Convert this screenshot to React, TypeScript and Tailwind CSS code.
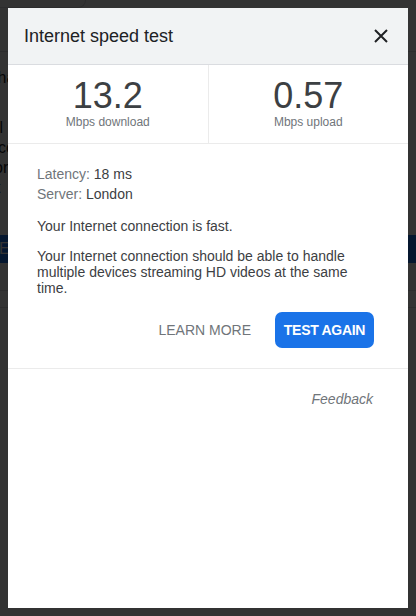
import React from "react";

export default function App() {
  return (
    <div
      className="relative w-[416px] h-[616px] overflow-hidden bg-white"
      style={{ fontFamily: '"Liberation Sans", Arial, sans-serif' }}
    >
      {/* Background page */}
      <div className="flex flex-col text-[#202124]">
        <div className="h-[8px] w-[86px] rounded-br-[10px] border-b border-r border-[#dadce0]" />
        <div className="h-[44px] border-b border-[#dadce0]" />
        <div className="pt-[16px] text-[16px] leading-[20px] -ml-[14px]">Chart</div>
        <div className="pt-[30px] text-[16px] leading-[20px] -ml-[4px]">ll</div>
        <div className="text-[16px] leading-[20px] -ml-[2px]">co</div>
        <div className="text-[16px] leading-[20px] -ml-[6px]">or</div>
        <div className="text-[16px] leading-[20px] -ml-[4px]">t</div>
        <div className="mt-[37px] h-[28px] bg-[#1a73e8] text-white text-[16px] leading-[28px] -ml-[1px]">E</div>
        <div className="h-[28px] border-b border-[#dadce0]" />
        <div className="h-[17px] border-b border-[#dadce0]" />
      </div>

      {/* Overlay */}
      <div className="absolute inset-0 bg-[#000000]/80" />

      {/* Dialog */}
      <div className="absolute left-[8px] top-[8px] w-[400px] h-[600px] bg-white flex flex-col">
        <div className="h-[57px] bg-[#f1f3f4] border-b border-[#dadce0] flex items-center justify-between pl-[16px] pr-[20px]">
          <span className="text-[18px] text-[#202124]">Internet speed test</span>
          <svg width="14" height="14" viewBox="0 0 14 14">
            <path d="M1 1 L13 13 M13 1 L1 13" stroke="#202124" strokeWidth="2" />
          </svg>
        </div>

        <div className="flex border-b border-[#ebebeb] h-[79px]">
          <div className="flex-1 flex flex-col items-center border-r border-[#ebebeb] pt-[13px]">
            <span className="text-[36px] leading-[36px] text-[#3c4043]">13.2</span>
            <span className="text-[12px] leading-[14px] text-[#70757a] mt-[1px]">Mbps download</span>
          </div>
          <div className="flex-1 flex flex-col items-center pt-[13px]">
            <span className="text-[36px] leading-[36px] text-[#3c4043]">0.57</span>
            <span className="text-[12px] leading-[14px] text-[#70757a] mt-[1px]">Mbps upload</span>
          </div>
        </div>

        <div className="px-[29px] pt-[20px] text-[14px] text-[#3c4043]">
          <div className="leading-[20px]">
            <span className="text-[#70757a]">Latency: </span>18 ms
          </div>
          <div className="leading-[20px]">
            <span className="text-[#70757a]">Server: </span>London
          </div>
          <div className="leading-[20px] mt-[12px]">Your Internet connection is fast.</div>
          <div className="leading-[16px] mt-[12px]">
            Your Internet connection should be able to handle multiple devices streaming HD videos at the same time.
          </div>
        </div>

        <div className="flex items-center justify-end gap-[24px] pr-[34px] mt-[16px]">
          <span className="text-[14px] text-[#70757a] uppercase">Learn more</span>
          <button className="h-[36px] w-[99px] rounded-[7px] bg-[#1a73e8] text-white text-[14px] font-bold tracking-[-0.3px] uppercase">
            Test again
          </button>
        </div>

        <div className="mt-[20px] border-t border-[#ebebeb] flex justify-end pr-[35px] pt-[20px]">
          <span className="text-[14px] italic text-[#70757a]">Feedback</span>
        </div>
      </div>
    </div>
  );
}
